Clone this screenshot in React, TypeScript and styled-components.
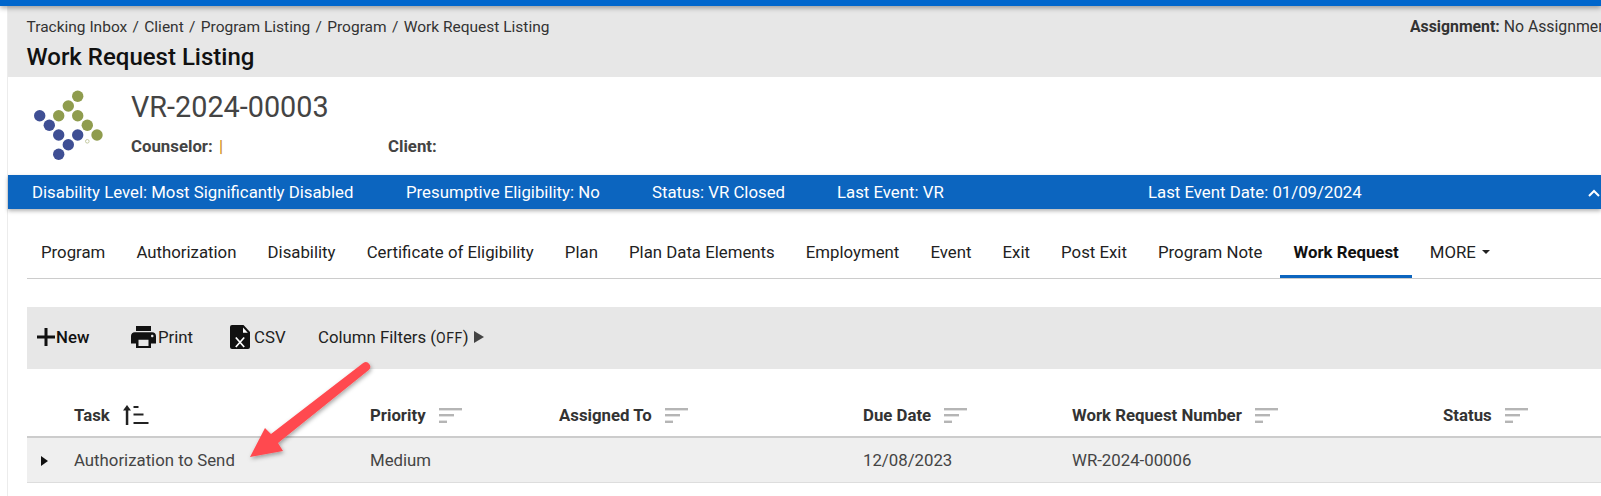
import React from 'react';
import styled, { createGlobalStyle } from 'styled-components';

const GlobalStyle = createGlobalStyle`
  html, body { margin: 0; padding: 0; background: #fff; overflow: hidden; }
  body { font-family: Roboto, "Liberation Sans", sans-serif; font-size: 16.8px; color: #333; }
`;

const crumbs = ['Tracking Inbox', 'Client', 'Program Listing', 'Program', 'Work Request Listing'];
const summary = [
  { text: 'Disability Level: Most Significantly Disabled', width: 374 },
  { text: 'Presumptive Eligibility: No', width: 246 },
  { text: 'Status: VR Closed', width: 185 },
  { text: 'Last Event: VR', width: 311 },
  { text: 'Last Event Date: 01/09/2024', width: 300 },
];
const tabs = [
  'Program', 'Authorization', 'Disability', 'Certificate of Eligibility', 'Plan', 'Plan Data Elements',
  'Employment', 'Event', 'Exit', 'Post Exit', 'Program Note', 'Work Request',
];
const greenDots = [[45.7, 8.3], [36.3, 18], [26.7, 27.7], [45.7, 27.7], [55.3, 37.3], [65, 47]];
const blueDots = [[7.7, 27.7], [17.3, 37.3], [26.7, 47], [45.7, 47], [36.3, 56.7], [26.7, 66.3]];

const Logo = () => (
  <LogoSvg viewBox="0 0 80 76">
    {greenDots.map(([x, y]) => <circle key={`${x}-${y}`} cx={x} cy={y} r="5.7" fill="#8f9c4e" />)}
    {blueDots.map(([x, y]) => <circle key={`${x}-${y}`} cx={x} cy={y} r="5.7" fill="#3f4f94" />)}
    <circle cx="55.3" cy="53.3" r="1.8" fill="none" stroke="#b5bd8c" strokeWidth="0.8" />
  </LogoSvg>
);

const SortLines = () => (
  <SortSvg viewBox="0 0 23 15">
    <rect x="0" y="0" width="23" height="2.4" fill="#b5b5b5" />
    <rect x="0" y="6" width="15" height="2.4" fill="#b5b5b5" />
    <rect x="0" y="12.6" width="8" height="2.4" fill="#b5b5b5" />
  </SortSvg>
);

const SortAsc = () => (
  <SortAscSvg viewBox="0 0 26 20">
    <path d="M0 5.5 4 0l4 5.5z" fill="#222" />
    <rect x="2.8" y="4" width="2.5" height="16" fill="#222" />
    <rect x="10.5" y="1" width="5" height="2" fill="#222" />
    <rect x="10.5" y="8.5" width="10" height="2" fill="#222" />
    <rect x="10.5" y="17" width="15" height="2" fill="#222" />
  </SortAscSvg>
);

export default function App() {
  return (
    <Page>
      <GlobalStyle />
      <TopBar />
      <Main>
        <PageHeader>
          <HeaderTop>
            <Breadcrumbs>
              {crumbs.map((c, i) => (
                <React.Fragment key={c}>
                  {i > 0 && <CrumbSep>/</CrumbSep>}
                  <span>{c}</span>
                </React.Fragment>
              ))}
            </Breadcrumbs>
            <Assignment><b>Assignment:</b> No Assignment</Assignment>
          </HeaderTop>
          <PageTitle>Work Request Listing</PageTitle>
        </PageHeader>

        <Profile>
          <Logo />
          <ProfileInfo>
            <CaseNumber>VR-2024-00003</CaseNumber>
            <ProfileMeta>
              <MetaLabel $width={257}>Counselor: <Pipe>|</Pipe></MetaLabel>
              <MetaLabel>Client:</MetaLabel>
            </ProfileMeta>
          </ProfileInfo>
        </Profile>

        <SummaryBar>
          {summary.map((s) => <SummaryItem key={s.text} $width={s.width}>{s.text}</SummaryItem>)}
          <Chevron viewBox="0 0 12 8">
            <path d="M1 7l5-5 5 5" fill="none" stroke="#fff" strokeWidth="2" />
          </Chevron>
        </SummaryBar>

        <Content>
          <TabRow>
            {tabs.map((t) => <Tab key={t} $active={t === 'Work Request'}>{t}</Tab>)}
            <Tab>MORE <Caret /></Tab>
          </TabRow>

          <Toolbar>
            <ToolButton $width={94} $bold $gap={1}>
              <ToolIcon viewBox="0 0 18 18" $w={18} $h={18}><path d="M7.5 0h3v7.5H18v3h-7.5V18h-3v-7.5H0v-3h7.5z" fill="#111" /></ToolIcon>
              New
            </ToolButton>
            <ToolButton $width={99}>
              <ToolIcon viewBox="2 3 20 18" $w={25} $h={22.5}>
                <path d="M19 8H5c-1.66 0-3 1.34-3 3v6h4v4h12v-4h4v-6c0-1.66-1.34-3-3-3zm-3 11H8v-5h8v5zm3-7c-.55 0-1-.45-1-1s.45-1 1-1 1 .45 1 1-.45 1-1 1zm-1-9H6v4h12V3z" fill="#111" />
              </ToolIcon>
              Print
            </ToolButton>
            <ToolButton $width={88} $gap={4}>
              <ToolIcon viewBox="0 0 20 24" $w={20} $h={24}>
                <path d="M2 0h11.5L20 7v15a2 2 0 0 1-2 2H2a2 2 0 0 1-2-2V2a2 2 0 0 1 2-2z" fill="#111" />
                <path d="M13 2.5 17.8 7.8H13z" fill="#fff" />
                <path d="M5.8 12.5l8.4 9.5M14.2 12.5l-8.4 9.5" stroke="#fff" strokeWidth="1.7" />
              </ToolIcon>
              CSV
            </ToolButton>
            <ToolButton $gap={5}>
              <span>Column Filters (<Off>OFF</Off>)</span>
              <FilterArrow />
            </ToolButton>
          </Toolbar>

          <TableHead>
            <Cell />
            <HeadCell>Task <SortAsc /></HeadCell>
            <HeadCell>Priority <SortLines /></HeadCell>
            <HeadCell>Assigned To <SortLines /></HeadCell>
            <HeadCell>Due Date <SortLines /></HeadCell>
            <HeadCell>Work Request Number <SortLines /></HeadCell>
            <HeadCell>Status <SortLines /></HeadCell>
          </TableHead>
          <TableRow>
            <Cell><RowToggle /></Cell>
            <Cell>Authorization to Send</Cell>
            <Cell>Medium</Cell>
            <Cell />
            <Cell>12/08/2023</Cell>
            <Cell>WR-2024-00006</Cell>
            <Cell />
          </TableRow>
        </Content>
      </Main>

      <ArrowOverlay viewBox="0 0 160 120">
        <defs>
          <filter id="arrowShadow" x="-20%" y="-20%" width="140%" height="140%">
            <feDropShadow dx="1" dy="2" stdDeviation="2" floodColor="#000" floodOpacity="0.35" />
          </filter>
        </defs>
        <path
          d="M10 95 25 66 31 72 123.2 1A4.5 4.5 0 0 1 128.8 8L38 81 43 89z"
          fill="#ff4a4f"
          filter="url(#arrowShadow)"
        />
      </ArrowOverlay>
    </Page>
  );
}

const Page = styled.div`
  position: relative;
  width: 1601px;
  height: 496px;
  overflow: hidden;
  background: #fff;
`;

const TopBar = styled.div`
  position: relative;
  z-index: 2;
  height: 6px;
  background: #0066cc;
  box-shadow: 0 2px 5px rgba(0, 0, 0, 0.35);
`;

const Main = styled.div`
  width: 1593px;
  margin-left: 7px;
  border-left: 1px solid #ececec;
  height: 490px;
`;

const PageHeader = styled.header`
  height: 71px;
  padding: 11px 0 0 18.5px;
  box-sizing: border-box;
  background: #e7e7e7;
`;

const HeaderTop = styled.div`
  display: flex;
  justify-content: space-between;
  white-space: nowrap;
  line-height: 20px;
`;

const Breadcrumbs = styled.div`
  color: #333;
  font-size: 15.5px;
`;

const CrumbSep = styled.span`
  margin: 0 5.3px;
`;

const Assignment = styled.div`
  width: 191px;
  flex: none;
  overflow: hidden;
  font-size: 15.8px;
  color: #333;
  b { font-weight: 700; }
`;

const PageTitle = styled.h1`
  margin: 6px 0 0;
  font-size: 24px;
  line-height: 28px;
  font-weight: 500;
  color: #111;
`;

const Profile = styled.section`
  height: 98px;
  display: flex;
  padding-left: 24px;
  box-sizing: border-box;
`;

const LogoSvg = styled.svg`
  width: 80px;
  height: 76px;
  margin-top: 11px;
  flex: none;
`;

const ProfileInfo = styled.div`
  margin-left: 19px;
  padding-top: 13px;
`;

const CaseNumber = styled.div`
  font-size: 28.8px;
  line-height: 34px;
  color: #444;
`;

const ProfileMeta = styled.div`
  display: flex;
  margin-top: 12px;
`;

const MetaLabel = styled.div<{ $width?: number }>`
  width: ${(p) => (p.$width ? `${p.$width}px` : 'auto')};
  font-size: 16.8px;
  line-height: 20px;
  font-weight: 700;
  color: #444;
`;

const Pipe = styled.span`
  color: #d18f1a;
  font-weight: 500;
  margin-left: 2px;
`;

const SummaryBar = styled.div`
  position: relative;
  z-index: 1;
  height: 34px;
  display: flex;
  align-items: center;
  padding-left: 24px;
  background: #0c65bf;
  box-shadow: 0 2px 4px rgba(0, 0, 0, 0.3);
  color: #fff;
  font-size: 16.8px;
  white-space: nowrap;
`;

const SummaryItem = styled.div<{ $width: number }>`
  width: ${(p) => p.$width}px;
  flex: none;
`;

const Chevron = styled.svg`
  width: 12px;
  height: 8px;
  flex: none;
  margin-left: 140px;
  margin-top: 2px;
`;

const Content = styled.div`
  padding-left: 19px;
`;

const TabRow = styled.nav`
  height: 70px;
  box-sizing: border-box;
  display: flex;
  align-items: flex-end;
  gap: 5.1px;
  padding-left: 1px;
  border-bottom: 1px solid #ccc;
`;

const Tab = styled.div<{ $active?: boolean }>`
  height: 37px;
  box-sizing: border-box;
  padding: 1px 13px 0;
  display: flex;
  align-items: flex-start;
  gap: 6px;
  white-space: nowrap;
  font-size: 16.8px;
  line-height: 20px;
  font-weight: ${(p) => (p.$active ? 700 : 400)};
  color: ${(p) => (p.$active ? '#111' : '#222')};
  border-bottom: 3px solid ${(p) => (p.$active ? '#0c65bf' : 'transparent')};
`;

const Caret = styled.span`
  width: 0;
  height: 0;
  margin-top: 8px;
  border-left: 4px solid transparent;
  border-right: 4px solid transparent;
  border-top: 4px solid #222;
`;

const Toolbar = styled.div`
  margin-top: 28px;
  height: 62px;
  box-sizing: border-box;
  padding: 0 0 2px 10px;
  display: flex;
  align-items: center;
  background: #e7e7e7;
  color: #222;
  font-size: 16.8px;
  white-space: nowrap;
`;

const ToolButton = styled.div<{ $width?: number; $bold?: boolean; $gap?: number }>`
  width: ${(p) => (p.$width ? `${p.$width}px` : 'auto')};
  flex: none;
  display: flex;
  align-items: center;
  gap: ${(p) => p.$gap ?? 2}px;
  font-weight: ${(p) => (p.$bold ? 500 : 400)};
  color: ${(p) => (p.$bold ? '#111' : '#222')};
`;

const ToolIcon = styled.svg<{ $w: number; $h: number }>`
  width: ${(p) => p.$w}px;
  height: ${(p) => p.$h}px;
  flex: none;
`;

const Off = styled.span`
  font-size: 14px;
  letter-spacing: 0.5px;
`;

const FilterArrow = styled.span`
  width: 0;
  height: 0;
  border-top: 6px solid transparent;
  border-bottom: 6px solid transparent;
  border-left: 10px solid #444;
  filter: blur(0.4px);
`;

const tableColumns = '47px 296px 189px 304px 209px 371px 1fr';

const TableHead = styled.div`
  display: grid;
  grid-template-columns: ${tableColumns};
  height: 69px;
  box-sizing: border-box;
  padding-top: 36px;
  border-bottom: 2px solid #ccc;
  font-size: 16.8px;
  font-weight: 700;
  color: #333;
`;

const HeadCell = styled.div`
  display: flex;
  align-items: center;
  gap: 13px;
  height: 20px;
  white-space: nowrap;
`;

const TableRow = styled.div`
  display: grid;
  grid-template-columns: ${tableColumns};
  align-items: center;
  height: 45px;
  box-sizing: border-box;
  background: #efefef;
  border-bottom: 1px solid #ddd;
  font-size: 16.8px;
  color: #444;
`;

const Cell = styled.div`
  white-space: nowrap;
`;

const RowToggle = styled.span`
  display: block;
  width: 0;
  height: 0;
  margin-left: 14px;
  margin-top: 2px;
  border-top: 5px solid transparent;
  border-bottom: 5px solid transparent;
  border-left: 7px solid #111;
`;

const SortSvg = styled.svg`
  width: 23px;
  height: 15px;
  flex: none;
`;

const SortAscSvg = styled.svg`
  width: 26px;
  height: 20px;
  flex: none;
`;

const ArrowOverlay = styled.svg`
  position: absolute;
  left: 240px;
  top: 362px;
  width: 160px;
  height: 120px;
  overflow: visible;
`;
